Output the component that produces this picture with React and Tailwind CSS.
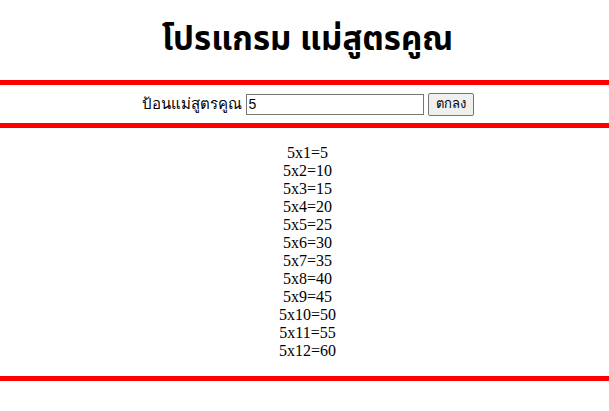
export default function App() {
  const rows = Array.from({ length: 12 }, (_, i) => i + 1);
  return (
    <div className="min-h-[411px] bg-white text-black">
      {/* Title */}
      <div className="h-[80px] flex items-center justify-center pl-[6px]">
        <h1 className="text-[33px] font-bold leading-none font-['Tahoma','Noto_Sans_Thai','Liberation_Sans',sans-serif]">
          โปรแกรม แม่สูตรคูณ
        </h1>
      </div>
      <div className="h-[5px] bg-[#ff0000]" />

      {/* Form */}
      <div className="h-[38px] flex items-center justify-center pl-[6px] gap-[4px] font-['Tahoma','Liberation_Sans',sans-serif] text-[15px]">
        <span>ป้อนแม่สูตรคูณ</span>
        <input
          defaultValue="5"
          className="w-[178px] h-[21px] border border-[#767676] px-[2px] text-[14px] font-['Liberation_Sans',sans-serif] outline-none"
        />
        <button className="h-[23px] px-[7px] border border-[#767676] rounded-[2px] bg-[#efefef] text-[13px]">
          ตกลง
        </button>
      </div>
      <div className="h-[5px] bg-[#ff0000]" />

      {/* Results */}
      <div className="py-[16px] pl-[6px] text-center font-['Liberation_Serif',serif] text-[16px] leading-[18px]">
        {rows.map((n) => (
          <div key={n}>
            5x{n}={5 * n}
          </div>
        ))}
      </div>
      <div className="h-[5px] bg-[#ff0000]" />
    </div>
  );
}
